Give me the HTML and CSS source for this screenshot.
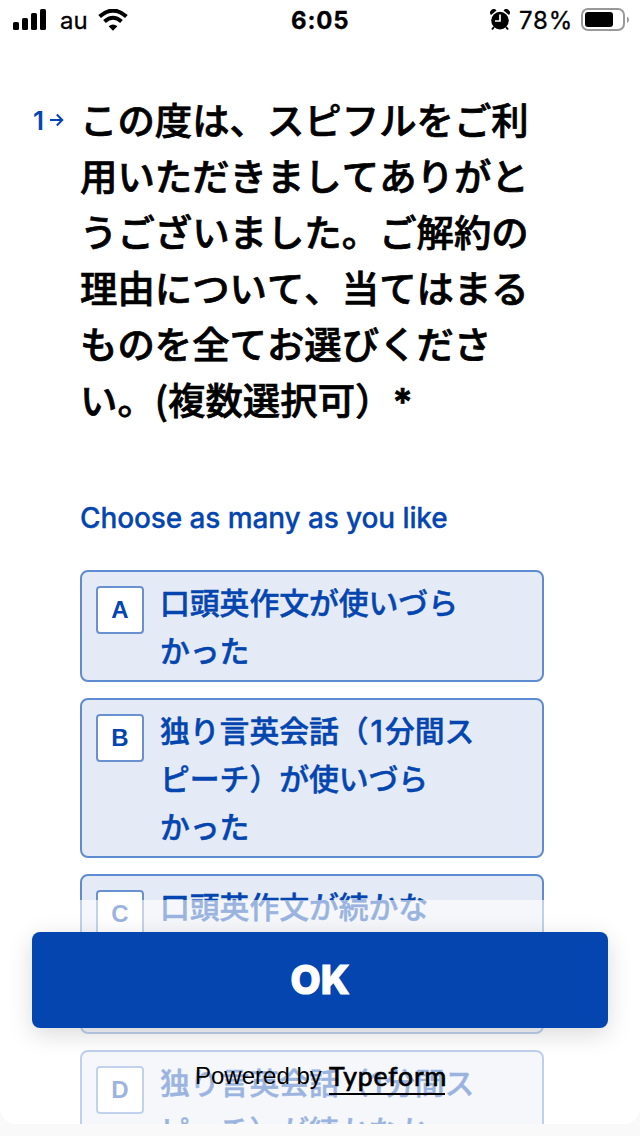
FILE: index.html
```
<!DOCTYPE html>
<html lang="ja">
<head>
    <meta charset="UTF-8">
    <meta name="viewport" content="width=device-width, initial-scale=1.0">
    <title>スピフル 解約アンケート</title>
    <link rel="stylesheet" href="styles.css">
</head>
<body>
    <div class="page">
        <div class="status">
            <svg class="signal" width="34" height="22" viewBox="0 0 34 22">
                <rect x="0" y="13" width="6" height="8" rx="1.6"/>
                <rect x="9" y="9" width="6" height="12" rx="1.6"/>
                <rect x="18" y="4" width="6" height="17" rx="1.6"/>
                <rect x="27" y="0" width="6" height="21" rx="1.6"/>
            </svg>
            <span class="carrier">au</span>
            <svg class="wifi" width="30" height="22" viewBox="0 0 30 22">
                <path d="M1.6 7.6Q15-4.4 28.4 7.6" fill="none" stroke="#000" stroke-width="4"/>
                <path d="M6.5 12.5Q15 5 23.5 12.5" fill="none" stroke="#000" stroke-width="4"/>
                <path d="M10.6 17.2Q15 13.6 19.4 17.2L15 21.8Z"/>
            </svg>
            <span class="time">6:05</span>
            <svg class="alarm" width="20" height="22" viewBox="0 0 20 22">
                <circle cx="10" cy="11.6" r="8.8"/>
                <path d="M1 6A3.4 3.4 0 0 1 6.5 1.4ZM19 6A3.4 3.4 0 0 0 13.5 1.4Z"/>
                <path d="M4 18L2 20.5M16 18L18 20.5" stroke="#000" stroke-width="2"/>
                <path d="M10 5.5V12H5" fill="none" stroke="#fff" stroke-width="1.7"/>
            </svg>
            <span class="percent">78%</span>
            <svg class="battery" width="48" height="24" viewBox="0 0 48 24">
                <rect x="1" y="1" width="42" height="21" rx="6" fill="none" stroke="#999" stroke-width="2"/>
                <rect x="4" y="4" width="28" height="15" rx="3"/>
                <path d="M46 8.5Q48 9.5 48 11.8T46 15Z" fill="#999"/>
            </svg>
        </div>

        <div class="question">
            <div class="num">
                <span>1</span>
                <svg width="14" height="14" viewBox="0 0 14 14">
                    <path d="M0 7H12M6.8 1.5L12.3 7L6.8 12.5" fill="none" stroke="#0445af" stroke-width="2"/>
                </svg>
            </div>
            <h1>この度は、スピフルをご利<br>用いただきましてありがと<br>うございました。ご解約の<br>理由について、当てはまる<br>ものを全てお選びくださ<br>い。(複数選択可）<span class="star">*</span></h1>
        </div>

        <div class="answers">
            <p class="hint">Choose as many as you like</p>
            <div class="option">
                <span class="key">A</span>
                <span class="label">口頭英作文が使いづら<br>かった</span>
            </div>
            <div class="option">
                <span class="key">B</span>
                <span class="label">独り言英会話（<i>1</i>分間ス<br>ピーチ）が使いづら<br>かった</span>
            </div>
            <div class="option">
                <span class="key">C</span>
                <span class="label">口頭英作文が続かな<br>かった<br>から</span>
            </div>
            <div class="option">
                <span class="key">D</span>
                <span class="label">独り言英会話（<i>1</i>分間ス<br>ピーチ）が続かなか</span>
            </div>
        </div>

        <div class="footer">
            <button class="ok">OK</button>
            <div class="powered">
                <span class="by">Powered by</span>
                <a class="brand">Typeform</a>
            </div>
        </div>
    </div>
</body>
</html>
```
FILE: styles.css
```
* {
    box-sizing: border-box;
}
body {
    margin: 0;
    height: 1136px;
    overflow: hidden;
    background: #f9f9f9;
    font-family: Inter, "Noto Sans CJK JP", sans-serif;
}
.page {
    position: relative;
    height: 1124px;
    overflow: hidden;
    background: #fff;
    border-radius: 0 0 16px 16px;
}
.status {
    display: flex;
    height: 40px;
    padding: 9px 11px 0 13px;
    line-height: 24px;
    font-size: 24px;
    -webkit-text-stroke: 0.3px;
}
.carrier {
    width: 28px;
    margin-left: 13px;
}
.wifi {
    margin-left: 10px;
}
.time {
    width: 60px;
    margin-left: 163px;
    font-weight: 700;
    letter-spacing: 0.8px;
}
.alarm {
    margin-left: 139px;
}
.percent {
    width: 54px;
    margin-left: 9px;
    letter-spacing: 0.8px;
}
.battery {
    margin: -1px 0 0 8px;
}
.question {
    display: flex;
    height: 336px;
    margin-top: 52px;
    padding-left: 32px;
}
.num {
    display: flex;
    align-items: center;
    width: 48px;
    height: 56px;
    gap: 2px;
    color: #0445af;
    font-size: 26px;
    font-weight: 600;
}
.num span {
    width: 16px;
    padding-left: 1px;
}
h1 {
    margin: -1px 0 0;
    font-family: "Noto Sans CJK JP", sans-serif;
    font-size: 37.4px;
    font-weight: 500;
    font-kerning: none;
    line-height: 56px;
    white-space: nowrap;
    -webkit-text-stroke: 0.7px;
}
.star {
    font-family: Inter, sans-serif;
    font-weight: 600;
    line-height: 0;
}
.answers {
    display: flex;
    flex-direction: column;
    gap: 16px;
    margin: 72px 96px 0 80px;
}
.hint {
    margin: 0 0 18px;
    color: #0445af;
    font-size: 28px;
    font-weight: 500;
    letter-spacing: -0.1px;
    line-height: 36px;
    -webkit-text-stroke: 0.3px;
}
.option {
    display: flex;
    gap: 16px;
    padding: 5px 14px 7px;
    border: 2px solid #5f8bd0;
    border-radius: 8px;
    background: #e5ebf6;
    color: #0445af;
}
.key {
    width: 48px;
    height: 48px;
    margin-top: 9px;
    border: 2px solid #6990d0;
    border-radius: 4px;
    background: #fff;
    font-family: "Liberation Sans", sans-serif;
    font-size: 24px;
    font-weight: bold;
    line-height: 44px;
    text-align: center;
}
.label {
    font-family: "Noto Sans CJK JP", sans-serif;
    font-size: 29.8px;
    font-weight: 500;
    font-kerning: none;
    line-height: 48px;
    white-space: nowrap;
    -webkit-text-stroke: 0.5px;
}
.label i {
    padding: 0 2px;
    font-family: Inter, sans-serif;
    font-style: normal;
    line-height: 0;
}
/* sits over the list, which shows through */
.footer {
    position: absolute;
    left: 0;
    right: 0;
    bottom: 0;
    height: 224px;
    padding: 32px;
    background: rgba(255, 255, 255, 0.6);
}
.ok {
    display: block;
    width: 100%;
    height: 96px;
    padding: 0 0 2px;
    border: 0;
    border-radius: 8px;
    background: #0445af;
    box-shadow: 0 6px 24px rgba(0, 0, 0, 0.15);
    color: #fff;
    font-family: Inter, sans-serif;
    font-size: 39px;
    font-weight: 800;
    -webkit-text-stroke: 1.2px;
}
.powered {
    display: flex;
    gap: 8px;
    margin-top: 32px;
    padding-left: 163px;
}
.by {
    width: 126px;
    font-family: "Liberation Sans", sans-serif;
    font-size: 24px;
    line-height: 32px;
    white-space: nowrap;
}
.brand {
    width: 116px;
    height: 35px;
    border-bottom: 2px solid #000;
    font-family: Lato, sans-serif;
    font-size: 26.5px;
    letter-spacing: 0.9px;
    line-height: 33px;
    -webkit-text-stroke: 0.7px;
}
```
